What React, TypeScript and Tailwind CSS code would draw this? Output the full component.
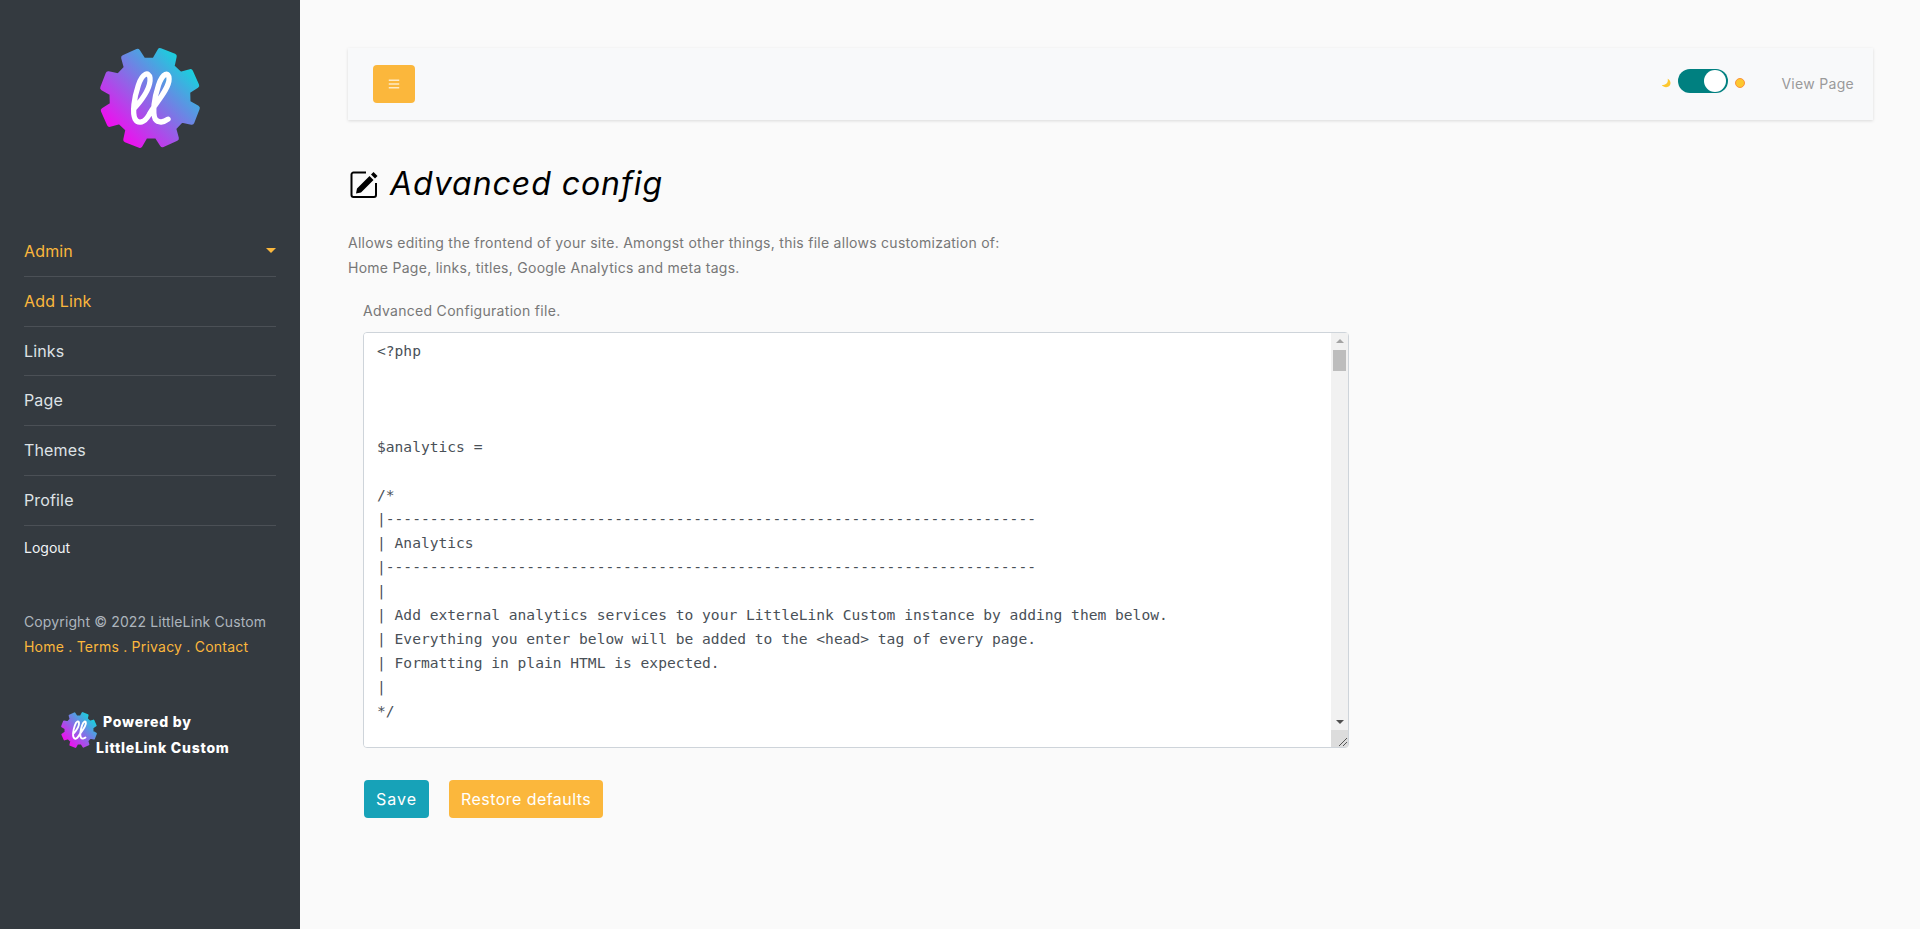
import { FaBars } from "react-icons/fa";

const configText = `<?php



$analytics =

/*
|--------------------------------------------------------------------------
| Analytics
|--------------------------------------------------------------------------
|
| Add external analytics services to your LittleLink Custom instance by adding them below.
| Everything you enter below will be added to the <head> tag of every page.
| Formatting in plain HTML is expected.
|
*/
`;

const gearPath = () => {
  const points: string[] = [];
  const teeth = 8;
  for (let i = 0; i < teeth; i++) {
    const a = ((i * 360) / teeth + 21) * (Math.PI / 180);
    const step = (Math.PI * 2) / teeth;
    const pts: [number, number][] = [
      [36, a - step * 0.31],
      [45.5, a - step * 0.2],
      [45.5, a + step * 0.2],
      [36, a + step * 0.31],
    ];
    pts.forEach(([r, t]) => points.push(`${(50 + r * Math.sin(t)).toFixed(2)},${(50 - r * Math.cos(t)).toFixed(2)}`));
  }
  return `M${points.join(" L")} Z`;
};

function Logo({ id, className }: { id: string; className: string }) {
  return (
    <svg viewBox="0 0 100 100" className={className}>
      <defs>
        <linearGradient id={id} gradientUnits="userSpaceOnUse" x1="14" y1="88" x2="88" y2="14">
          <stop offset="0" stopColor="#ff00f0" />
          <stop offset="1" stopColor="#0cdcdc" />
        </linearGradient>
      </defs>
      <path d={gearPath()} fill={`url(#${id})`} stroke={`url(#${id})`} strokeWidth="5" strokeLinejoin="round" />
      <path
        d="M35 60 C44 50 51 40 50 31 C49 25 43 26 39 38 C35 50 33 64 36 70 C39 75 45 73 49 66 C54 56 68 42 68 32 C68 25 62 26 58 38 C54 50 52 64 55 70 C58 74 63 73 67 70"
        fill="none"
        stroke="#fff"
        strokeWidth="5"
        strokeLinecap="round"
        strokeLinejoin="round"
      />
    </svg>
  );
}

function NavRow({ label, height, active, caret }: { label: string; height: string; active?: boolean; caret?: boolean }) {
  return (
    <div className={`flex ${height} items-center justify-between border-b border-[#4b5056] pb-px`}>
      <span className={`text-[16px] tracking-[0.15px] ${active ? "text-[#fbb73c]" : "text-[#dee2e6]"}`}>{label}</span>
      {caret ? <span className="h-0 w-0 border-x-[5px] border-t-[5px] border-x-transparent border-t-[#fbb73c]" /> : null}
    </div>
  );
}

// the browser hides native scrollbars when photographed, so this one is drawn over the textarea
function TextareaScrollbar() {
  return (
    <div className="absolute top-px right-px bottom-px flex w-[17px] flex-col bg-[#f1f1f1]">
      <div className="flex h-[17px] items-center justify-center pb-px">
        <span className="h-0 w-0 border-x-4 border-b-4 border-x-transparent border-b-[#a3a3a3]" />
      </div>
      <div className="mx-[2px] h-[21px] bg-[#bdbdbd]" />
      <div className="flex-1" />
      <div className="flex h-[17px] items-center justify-center pt-px">
        <span className="h-0 w-0 border-x-4 border-t-4 border-x-transparent border-t-[#505050]" />
      </div>
      <div className="h-[17px] bg-[#dcdcdc]">
        <svg viewBox="0 0 17 17" className="h-[17px] w-[17px]">
          <path d="M8 16 L16 8 M12 16 L16 12" stroke="#555" strokeWidth="1" fill="none" />
        </svg>
      </div>
    </div>
  );
}

export default function App() {
  return (
    <div className="flex min-h-screen bg-[#fafafa] font-['Inter','Liberation_Sans',sans-serif]">
      <aside className="flex w-[300px] shrink-0 flex-col bg-[#343a40] px-6">
        <div className="flex justify-center pt-[45px]">
          <Logo id="gear-large" className="h-[106px] w-[106px]" />
        </div>
        <nav className="mt-[75px] flex flex-col">
          <NavRow label="Admin" height="h-[51px]" active caret />
          <NavRow label="Add Link" height="h-[50px]" active />
          <NavRow label="Links" height="h-[49px]" />
          <NavRow label="Page" height="h-[50px]" />
          <NavRow label="Themes" height="h-[50px]" />
          <NavRow label="Profile" height="h-[50px]" />
          <span className="mt-[12px] text-[14px] leading-[20px] text-[#f1f3f5]">Logout</span>
        </nav>
        <p className="mt-[51px] text-[14px] leading-[25px] text-[#adb5bd]">
          <span className="tracking-[0.12px]">Copyright © 2022 LittleLink Custom</span>
          <br />
          <span className="tracking-[0.22px] text-[#fbb73c]">Home . Terms . Privacy . Contact</span>
        </p>
        <div className="mt-[52px] flex items-start pl-[36px]">
          <Logo id="gear-small" className="h-[38px] w-[38px] shrink-0" />
          <p className="mt-[-2px] -ml-[2px] text-[14px] leading-[26px] font-extrabold tracking-[0.75px] whitespace-nowrap text-white">
            <span className="pl-[7px]">Powered by</span>
            <br />
            LittleLink Custom
          </p>
        </div>
      </aside>

      <main className="min-w-0 flex-1 pt-[48px] pr-[47px] pl-[48px]">
        <div className="flex h-[72px] items-center justify-between bg-[#f8f9fa] pr-[19px] pl-[25px] shadow-[0_1px_3px_rgba(0,0,0,0.13)]">
          <button className="flex h-[38px] w-[42px] items-center justify-center rounded-[4px] bg-[#fbb73c]">
            <FaBars className="text-[12px] text-white/70" />
          </button>
          <div className="flex items-center pb-[2px]">
            <svg viewBox="0 0 12 12" className="h-[10px] w-[10px]">
              <path d="M8 1 C9 5 6.5 8.5 1 8.5 C3 11.5 8 12 10.5 9 C12.5 6 11 2.5 8 1 Z" fill="#fcc72f" />
            </svg>
            <span className="relative mx-[7px] mb-[4px] h-[24px] w-[50px] rounded-full bg-[#008080]">
              <span className="absolute top-px right-[2px] h-[22px] w-[22px] rounded-full bg-white" />
            </span>
            <span className="h-[10px] w-[10px] rounded-full border border-[#fb923c] bg-[#fdc82f]" />
            <span className="ml-[36px] text-[14px] tracking-[0.3px] text-[#9a9a9a]">View Page</span>
          </div>
        </div>

        <h1 className="mt-[40px] flex items-center text-[32px] leading-[48px] font-normal tracking-[0.95px] text-black italic">
          <svg viewBox="0 0 30 30" className="mr-[10px] ml-[2px] h-[30px] w-[30px] shrink-0">
            <path d="M16 3.5 H3.5 A2 2 0 0 0 1.5 5.5 V26 A2 2 0 0 0 3.5 28 H24 A2 2 0 0 0 26 26 V14" fill="none" stroke="#000" strokeWidth="2" />
            <path d="M7 19.5 L19.5 7 L23.5 11 L11 23.5 L6 24.5 Z M21 5.5 L23.5 3 L27.5 7 L25 9.5 Z" fill="#000" />
          </svg>
          Advanced config
        </h1>

        <p className="mt-[22px] text-[14px] leading-[25px] tracking-[0.27px] text-[#777]">
          Allows editing the frontend of your site. Amongst other things, this file allows customization of:
          <br />
          Home Page, links, titles, Google Analytics and meta tags.
        </p>

        <div className="mt-[20px] pl-[15px]">
          <label className="block text-[14px] leading-[21px] tracking-[0.3px] text-[#777]">Advanced Configuration file.</label>
          <div className="relative mt-[11px] w-[986px]">
            <textarea
              readOnly
              defaultValue={configText}
              className="block h-[416px] w-full resize-none rounded-[4px] border border-[#ced4da] bg-white px-[13px] py-[6px] font-['DejaVu_Sans_Mono',monospace] text-[14.6px] leading-[24px] text-[#495057] outline-none"
            />
            <TextareaScrollbar />
          </div>
          <div className="mt-[32px] flex gap-[20px] pl-px">
            <button className="h-[38px] rounded-[4px] bg-[#17a2b8] px-[12px] text-[16px] tracking-[1px] text-white">Save</button>
            <button className="h-[38px] rounded-[4px] bg-[#fbb73c] px-[12px] text-[16px] tracking-[0.45px] text-white">Restore defaults</button>
          </div>
        </div>
      </main>
    </div>
  );
}
